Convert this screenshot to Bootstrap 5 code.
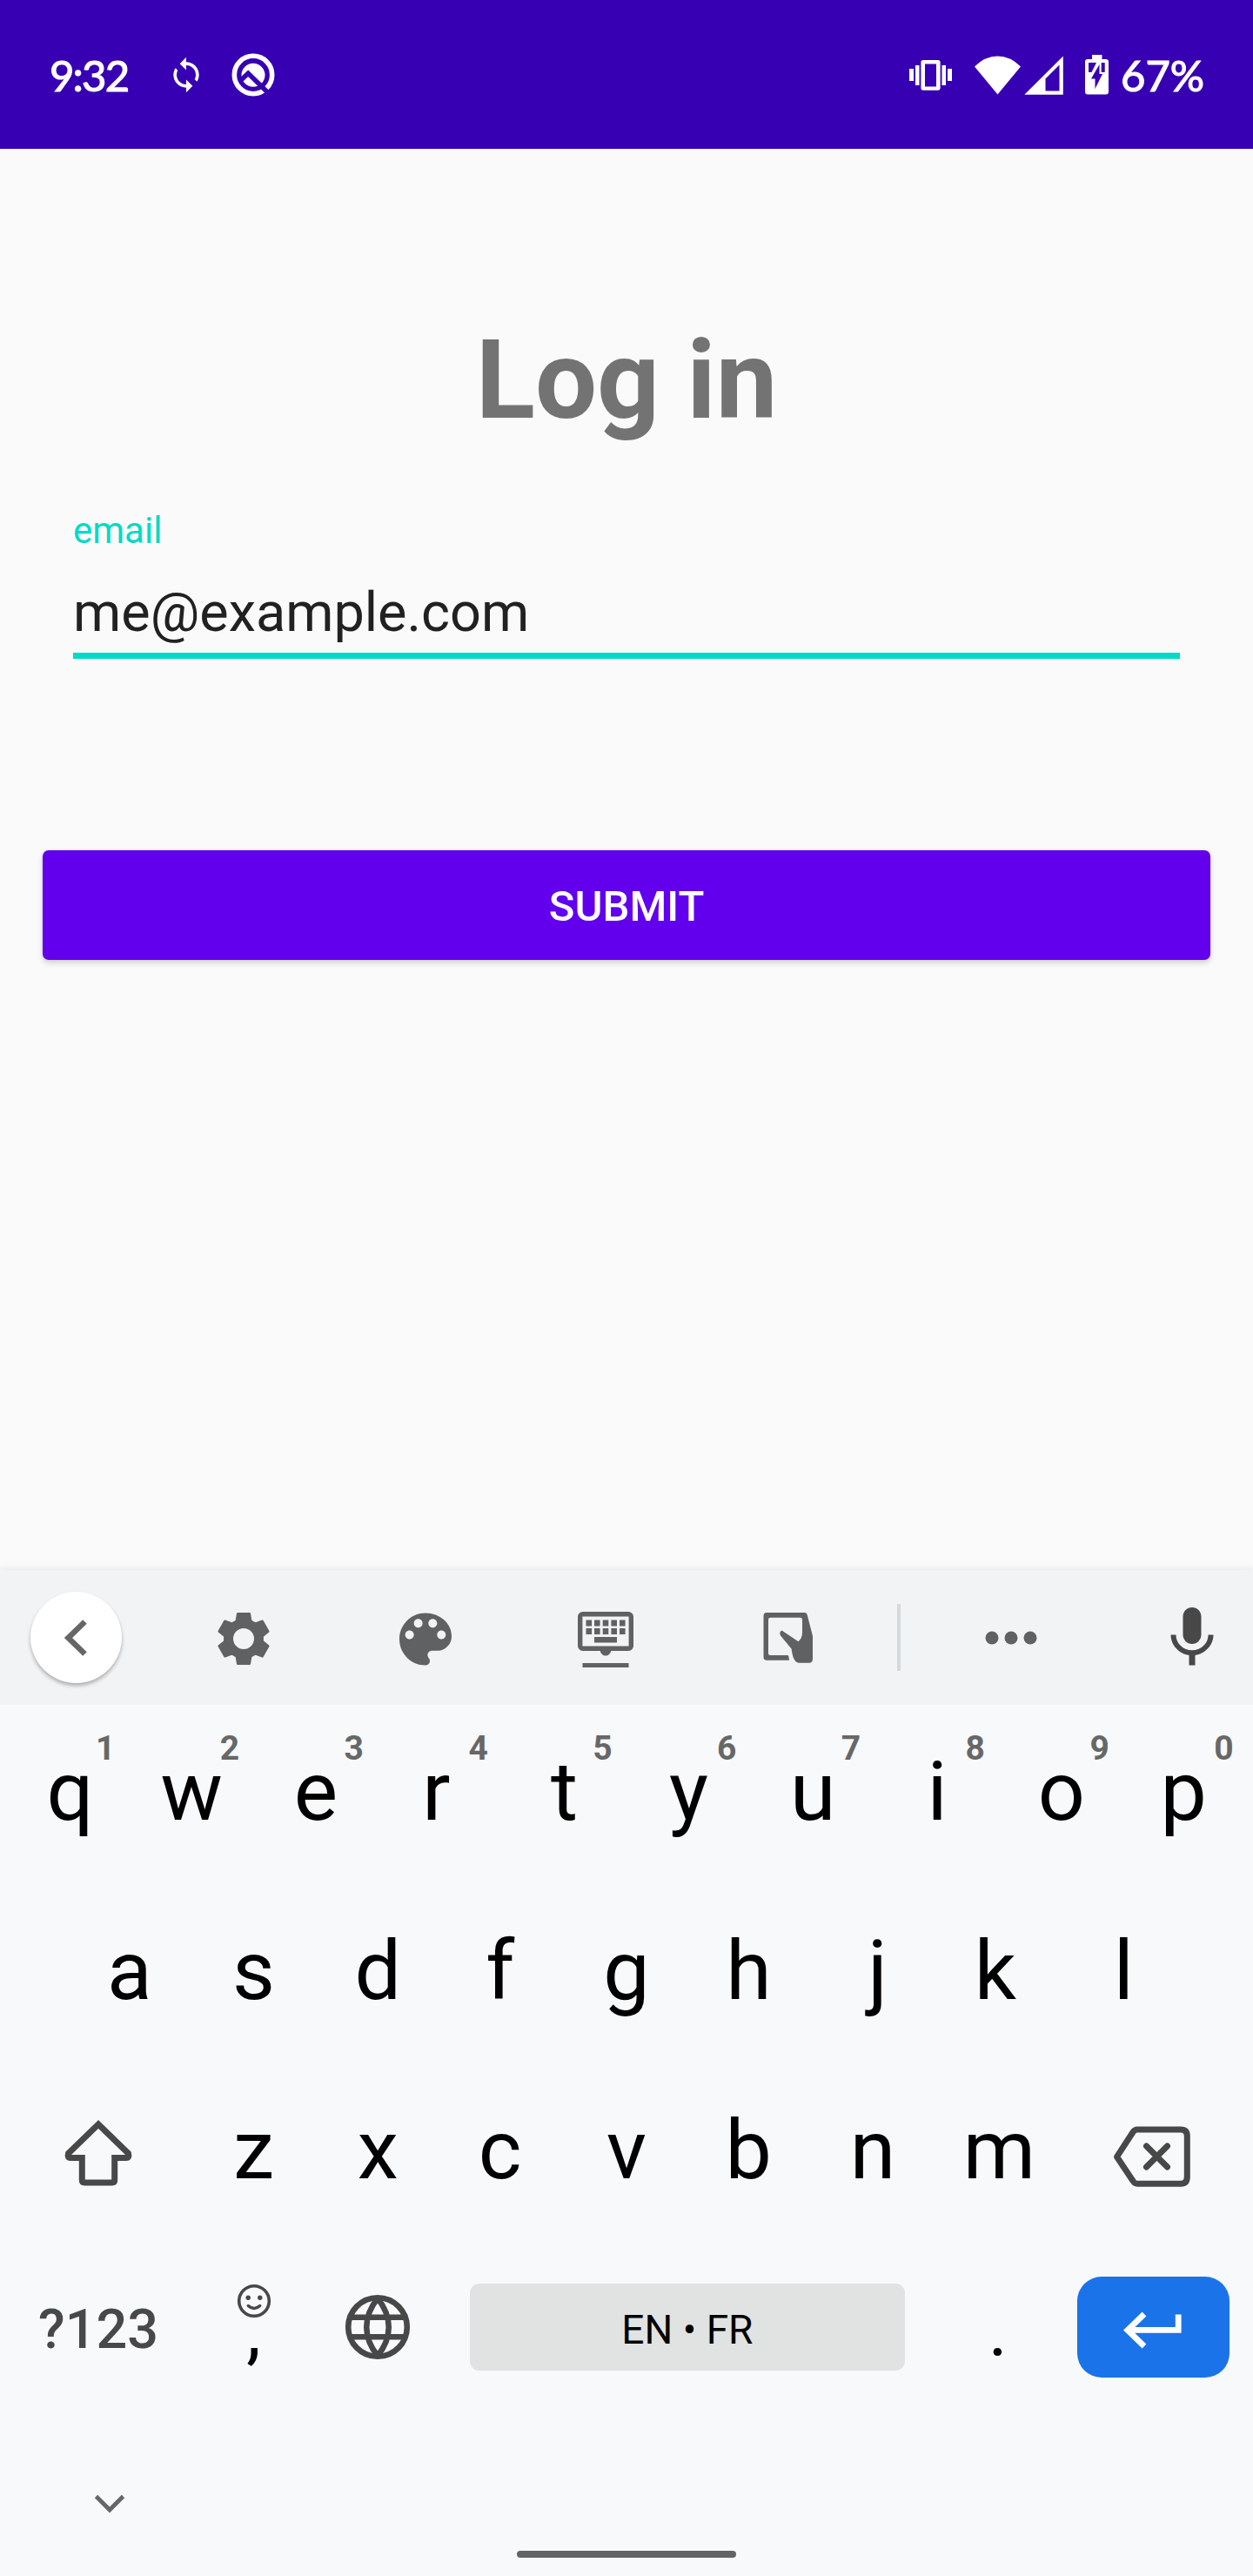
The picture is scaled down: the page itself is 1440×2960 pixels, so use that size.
<!DOCTYPE html>
<html lang="en">
<head>
<meta charset="utf-8">
<meta name="viewport" content="width=device-width, initial-scale=1">
<title>Log in</title>
<link rel="stylesheet" href="https://cdn.jsdelivr.net/npm/bootstrap@5.3.0/dist/css/bootstrap.min.css">
<style>
  body { font-family: Roboto, "Liberation Sans", sans-serif; background: #fafafa; color: #212121; }
  svg { display: block; flex: none; }
  .phone { width: 1440px; height: 2960px; overflow: hidden; }
  .status { height: 171px; background: #3700b3; color: #fff; font: 400 49px/58px Lato, sans-serif; -webkit-text-stroke: 1.2px #fff; padding: 0 56px; }
  .status svg { -webkit-text-stroke: 0; }
  .clock { width: 93px; letter-spacing: -1.8px; white-space: nowrap; padding-left: 1px; }
  .percent { width: 97px; white-space: nowrap; padding-left: 1px; }
  .sync { margin-left: 43px; }
  .qmark { margin-left: 30px; }
  .signals { margin-right: 6px; }
  .screen { height: 1633px; padding: 0 49px; }
  .title { font-size: 126px; line-height: 148px; font-weight: 700; color: #737373; padding-top: 192px; }
  .field { padding: 0 35px; margin-top: 74px; }
  .field label { font-size: 42px; line-height: 50px; color: #03dac5; }
  .field .form-control { font-size: 63px; line-height: 74px; height: 112px; padding: 12px 0 0; margin-top: 10px; color: #212121; background: none; border: 0; border-bottom: 7px solid #00dac6; border-radius: 0; box-shadow: none; }
  .submit { height: 126px; margin-top: 220px; background: #6200ee; color: #fff; border: 0; border-radius: 7px; font-size: 49px; font-weight: 500; line-height: 58px; padding: 4px 0 0; box-shadow: 0 4px 6px rgba(0,0,0,.14), 0 0 4px rgba(0,0,0,.08); }
  .toolbar { position: relative; height: 155px; background: #f1f3f5; color: #5f6163; display: grid; grid-template-columns: 175px 209px 210px 204px 216px 38px 219px 169px; align-items: center; justify-items: center; box-shadow: 0 -2px 8px rgba(0,0,0,.07); }
  .back { width: 105px; height: 105px; background: #fff; box-shadow: 0 3px 4px rgba(0,0,0,.28); }
  .rule { width: 4px; height: 77px; background: #d5d9dc; }
  .mic { margin-left: 29px; margin-top: 1px; }
  .keys { height: 1001px; background: #f8f9fb; color: #000; padding: 0 6px; position: relative; z-index: 1; }
  .krow { height: 206px; }
  .key { width: 142.8px; height: 206px; padding-bottom: 7px; font-size: 95px; line-height: 110px; position: relative; flex: none; }
  .nudge-s { padding-right: 5px; }
  .nudge-l { padding-right: 9px; }
  .nudge-r { padding-left: 6px; }
  .wide { width: 214.2px; color: #484848; }
  .key sup { position: absolute; left: 104px; top: 27px; width: 20px; text-align: center; font-size: 39px; line-height: 46px; font-weight: 700; color: #666867; }
  .sym { font-size: 63px; font-weight: 500; }
  .globe { width: 142.8px; padding-bottom: 12px; }
  .comma { padding-top: 47px; }
  .comma span, .dot span { font-size: 84px; line-height: 98px; }
  .comma span { margin-top: -34px; }
  .dot { padding-top: 53px; padding-right: 3px; }
  .space-cell { width: 571.2px; padding-bottom: 12px; padding-right: 3px; }
  .space { width: 500px; height: 100px; background: #e1e3e2; border-radius: 11px; font-size: 46px; line-height: 54px; padding-top: 5px; }
  .enter-cell { padding-bottom: 12px; padding-right: 2px; }
  .enter { width: 175px; height: 116px; background: #1a73e8; border-radius: 28px; padding-top: 6px; }
  .down { margin: 82px 0 0 102px; }
  .home { width: 252px; height: 8px; border-radius: 4px; background: #636564; margin-top: 42px; }
</style>
</head>
<body>
<div class="phone d-flex flex-column">
  <header class="status d-flex align-items-center justify-content-between">
    <div class="d-flex align-items-center">
      <span class="clock">9:32</span>
      <svg class="sync" width="44" height="44" viewBox="0 0 24 24" fill="#fff"><path d="M12 4V1L8 5l4 4V6c3.310 0 6 2.690 6 6 0 1.010-.25 1.970-.7 2.800l1.460 1.460C19.540 15.030 20 13.570 20 12c0-4.420-3.580-8-8-8zm0 14c-3.310 0-6-2.690-6-6 0-1.010.25-1.970.7-2.800L5.240 7.740C4.460 8.970 4 10.430 4 12c0 4.420 3.580 8 8 8v3l4-4-4-4v3z"/></svg>
      <svg class="qmark" width="50" height="50" viewBox="-25 -25 50 50"><circle r="21.700" fill="none" stroke="#fff" stroke-width="5.600"/><circle r="13.500" cy=".3" fill="#fff"/><path d="M-14.500 6.500-5.800-1.800 19.500 23" fill="none" stroke="#3700b3" stroke-width="5.400"/></svg>
    </div>
    <div class="d-flex align-items-center">
      <svg class="signals" width="236" height="60" viewBox="1045 55 236 60" fill="#fff">
        <path d="M1045 78h5v14h-5zM1052 74h4.500v23h-4.500zM1082.500 74h4.500v23h-4.500zM1089 78h5v14h-5z"/>
        <path fill-rule="evenodd" d="M1061 68h17q2.600 0 2.600 2.600v29.500q0 2.600-2.600 2.600h-17q-2.600 0-2.600-2.600V70.600q0-2.600 2.600-2.600zM1063 72.500v26h13v-26z"/>
        <path d="M1146.500 107.500 1120 75.500Q1132 63.500 1146.500 63.500T1173 75.500Z"/>
        <path fill-rule="evenodd" d="M1177.300 107.700 1221.800 63.500V107.700ZM1201.500 89.500V103.500H1217.500V73.500Z"/>
        <path fill-rule="evenodd" d="M1255 62h11.500v5h4.500q3 0 3 3v34.500q0 3-3 3h-21q-3 0-3-3V70q0-3 3-3h5zM1251 71v11h3.500L1260 71zM1263.500 73 1254 89.500h4.500V101l8.500-17h-3.500zM1265.700 71v11h4V71z"/>
      </svg>
      <span class="percent">67%</span>
    </div>
  </header>

  <main class="screen">
    <h1 class="title text-center mb-0">Log in</h1>
    <div class="field">
      <label for="email" class="d-block">email</label>
      <input id="email" class="form-control" type="text" value="me@example.com">
    </div>
    <button class="submit btn w-100 d-flex align-items-center justify-content-center" type="button">SUBMIT</button>
  </main>

  <nav class="toolbar">
    <div class="back rounded-circle d-flex align-items-center justify-content-center">
      <svg width="30" height="42" viewBox="1.500 0 30 42"><path d="M26 2.500 7 21l19 18.500" fill="none" stroke="#666" stroke-width="6.500"/></svg>
    </div>
    <svg width="60" height="64" viewBox="-30 -33 60 64" fill="currentColor"><circle r="17.500" fill="none" stroke="currentColor" stroke-width="11"/><g id="pair"><path id="tooth" d="M-6.800-30H6.800Q7.800-30 8-29L9.700-19H-9.700L-8-29Q-7.800-30-6.800-30Z"/><use href="#tooth" transform="rotate(180)"/></g><use href="#pair" transform="rotate(60)"/><use href="#pair" transform="rotate(120)"/></svg>
    <svg width="80" height="80" viewBox="0 -.45 24 24" fill="currentColor"><path d="M12 3c-4.970 0-9 4.030-9 9s4.030 9 9 9c.83 0 1.500-.67 1.500-1.500 0-.39-.15-.74-.39-1.010-.23-.26-.38-.61-.38-.99 0-.83.67-1.500 1.500-1.500H16c2.760 0 5-2.240 5-5 0-4.420-4.030-8-9-8zm-5.500 9c-.83 0-1.500-.67-1.500-1.500S5.670 9 6.500 9 8 9.670 8 10.500 7.330 12 6.500 12zm3-4C8.670 8 8 7.330 8 6.500S8.670 5 9.500 5s1.500.67 1.500 1.500S10.330 8 9.500 8zm5 0c-.83 0-1.500-.67-1.500-1.500S13.670 5 14.500 5s1.500.67 1.500 1.500S15.330 8 14.500 8zm3 4c-.83 0-1.500-.67-1.500-1.500S16.670 9 17.500 9s1.500.67 1.500 1.500-.67 1.500-1.500 1.500z"/></svg>
    <svg width="64" height="68" viewBox="664 1848 64 68" fill="currentColor"><rect x="666.700" y="1854.700" width="58.600" height="39.600" rx="3" fill="none" stroke="currentColor" stroke-width="5.400"/><path d="M673.500 1861.500h6.600v7h-6.600zM683 1861.500h6.600v7h-6.600zM692.700 1861.500h6.600v7h-6.600zM702.400 1861.500h6.600v7h-6.600zM712 1861.500h6.600v7h-6.600zM673.500 1871h6.600v7h-6.600zM683 1871h6.600v7h-6.600zM692.700 1871h6.600v7h-6.600zM702.400 1871h6.600v7h-6.600zM712 1871h6.600v7h-6.600zM683 1881h26v6.500h-26zM689.500 1896a6.600 8 0 0 0 13 0zM669.500 1911h53v5h-53z"/></svg>
    <svg width="60" height="60" viewBox="876 1852 60 60" fill="currentColor"><path d="M881 1853H924.500Q927.300 1853 927.800 1856L934 1880V1906Q934 1910.700 930 1910.700H918Q914 1910.700 911.500 1904Q910.300 1900 909.500 1894.500L897.500 1880Q894.500 1876 898.500 1873.500L917.500 1886.300Q922 1882 922 1876V1861Q922 1858.700 919.700 1858.700H885.500Q883 1858.700 883 1861V1899.500Q883 1902 885.500 1902H905.300Q906.500 1902 907 1907.800H881Q877.500 1907.800 877.500 1904V1857Q877.500 1853 881 1853Z"/></svg>
    <span class="rule"></span>
    <svg width="60" height="16" viewBox="0 0 60 16" fill="currentColor"><circle cx="8" cy="8" r="7.500"/><circle cx="30" cy="8" r="7.500"/><circle cx="52" cy="8" r="7.500"/></svg>
    <svg class="mic" width="84" height="84" viewBox="0 0 24 24" fill="#484848"><path d="M12 14c1.660 0 2.990-1.340 2.990-3L15 5c0-1.660-1.340-3-3-3S9 3.340 9 5v6c0 1.660 1.340 3 3 3zm5.300-3c0 3-2.540 5.100-5.300 5.100S6.700 14 6.700 11H5c0 3.410 2.720 6.230 6 6.720V21h2v-3.280c3.280-.48 6-3.300 6-6.720h-1.700z"/></svg>
  </nav>

  <section class="keys">
    <div class="krow d-flex justify-content-center">
      <div class="key nudge-r d-flex align-items-center justify-content-center">q<sup>1</sup></div>
      <div class="key d-flex align-items-center justify-content-center">w<sup>2</sup></div>
      <div class="key d-flex align-items-center justify-content-center">e<sup>3</sup></div>
      <div class="key nudge-l d-flex align-items-center justify-content-center">r<sup>4</sup></div>
      <div class="key d-flex align-items-center justify-content-center">t<sup>5</sup></div>
      <div class="key d-flex align-items-center justify-content-center">y<sup>6</sup></div>
      <div class="key d-flex align-items-center justify-content-center">u<sup>7</sup></div>
      <div class="key d-flex align-items-center justify-content-center">i<sup>8</sup></div>
      <div class="key d-flex align-items-center justify-content-center">o<sup>9</sup></div>
      <div class="key nudge-s d-flex align-items-center justify-content-center">p<sup>0</sup></div>
    </div>
    <div class="krow d-flex justify-content-center">
      <div class="key d-flex align-items-center justify-content-center">a</div>
      <div class="key d-flex align-items-center justify-content-center">s</div>
      <div class="key d-flex align-items-center justify-content-center">d</div>
      <div class="key nudge-s d-flex align-items-center justify-content-center">f</div>
      <div class="key d-flex align-items-center justify-content-center">g</div>
      <div class="key nudge-s d-flex align-items-center justify-content-center">h</div>
      <div class="key nudge-r d-flex align-items-center justify-content-center">j</div>
      <div class="key nudge-l d-flex align-items-center justify-content-center">k</div>
      <div class="key d-flex align-items-center justify-content-center">l</div>
    </div>
    <div class="krow d-flex">
      <div class="key wide d-flex align-items-center justify-content-center">
        <svg width="80" height="82" viewBox="73 2429.500 80 82" fill="none" stroke="currentColor" stroke-width="7"><path d="M113 2440.500 78.500 2474Q77 2479 81 2479H94.300V2504.500Q94.300 2507.500 97.300 2507.500H128.700Q131.700 2507.500 131.700 2504.500V2479H145Q149 2479 147.500 2474Z"/></svg>
      </div>
      <div class="key d-flex align-items-center justify-content-center">z</div>
      <div class="key d-flex align-items-center justify-content-center">x</div>
      <div class="key nudge-s d-flex align-items-center justify-content-center">c</div>
      <div class="key d-flex align-items-center justify-content-center">v</div>
      <div class="key nudge-s d-flex align-items-center justify-content-center">b</div>
      <div class="key nudge-s d-flex align-items-center justify-content-center">n</div>
      <div class="key d-flex align-items-center justify-content-center">m</div>
      <div class="key wide d-flex align-items-center justify-content-center">
        <svg width="96" height="90" viewBox="1279 2425.500 96 90" fill="none" stroke="currentColor" stroke-width="7" stroke-linejoin="round"><path d="M1283.500 2477.800 1302 2449.500Q1304 2446.500 1307 2446.500H1357Q1364.300 2446.500 1364.300 2454V2501Q1364.300 2508.700 1357 2508.700H1307Q1304 2508.700 1302 2505.500Z"/><path d="M1317.500 2465.500 1341.500 2489.500M1341.500 2465.500 1317.500 2489.500" stroke-linecap="round"/></svg>
      </div>
    </div>
    <div class="krow d-flex">
      <div class="key wide sym d-flex align-items-center justify-content-center">?123</div>
      <div class="key comma d-flex flex-column align-items-center">
        <svg width="40" height="40" viewBox="-20 -20 40 40" fill="none" stroke="#484848" stroke-width="3.600"><circle r="17.300"/><g fill="#484848" stroke="none"><circle cx="-6.800" cy="-3.800" r="2.700"/><circle cx="6.800" cy="-3.800" r="2.700"/></g><path d="M-6.700 5.500Q0 11.500 6.700 5.500" stroke-width="3.500" stroke-linecap="round"/></svg>
        <span>,</span>
      </div>
      <div class="key wide globe d-flex align-items-center justify-content-center">
        <svg width="76" height="76" viewBox="-38 -38 76 76" fill="none" stroke="currentColor" stroke-width="6.600"><circle r="33.800"/><path d="M0-33C-17-12-17 12 0 33M0-33C17-12 17 12 0 33M-32-11.300H32M-32 11.300H32"/></svg>
      </div>
      <div class="key space-cell d-flex align-items-center justify-content-center">
        <div class="space d-flex align-items-center justify-content-center">EN • FR</div>
      </div>
      <div class="key dot d-flex flex-column align-items-center"><span>.</span></div>
      <div class="key wide enter-cell d-flex align-items-center justify-content-center">
        <div class="enter d-flex align-items-center justify-content-center">
          <svg width="70" height="44" viewBox="1290 2655 70 44" fill="none" stroke="#fff" stroke-width="6.800"><path d="M1353.200 2659.500V2677.300H1296M1314 2659 1294.800 2677.500 1314 2696"/></svg>
        </div>
      </div>
    </div>
    <footer class="d-flex flex-column">
      <svg class="down" width="36" height="24" viewBox="108 2865 36 24" fill="none" stroke="#666" stroke-width="4.800"><path d="M110.500 2868.500 126 2884 141.500 2868.500"/></svg>
      <span class="home align-self-center"></span>
    </footer>
  </section>
</div>
<script src="https://cdn.jsdelivr.net/npm/bootstrap@5.3.0/dist/js/bootstrap.bundle.min.js"></script>
</body>
</html>
